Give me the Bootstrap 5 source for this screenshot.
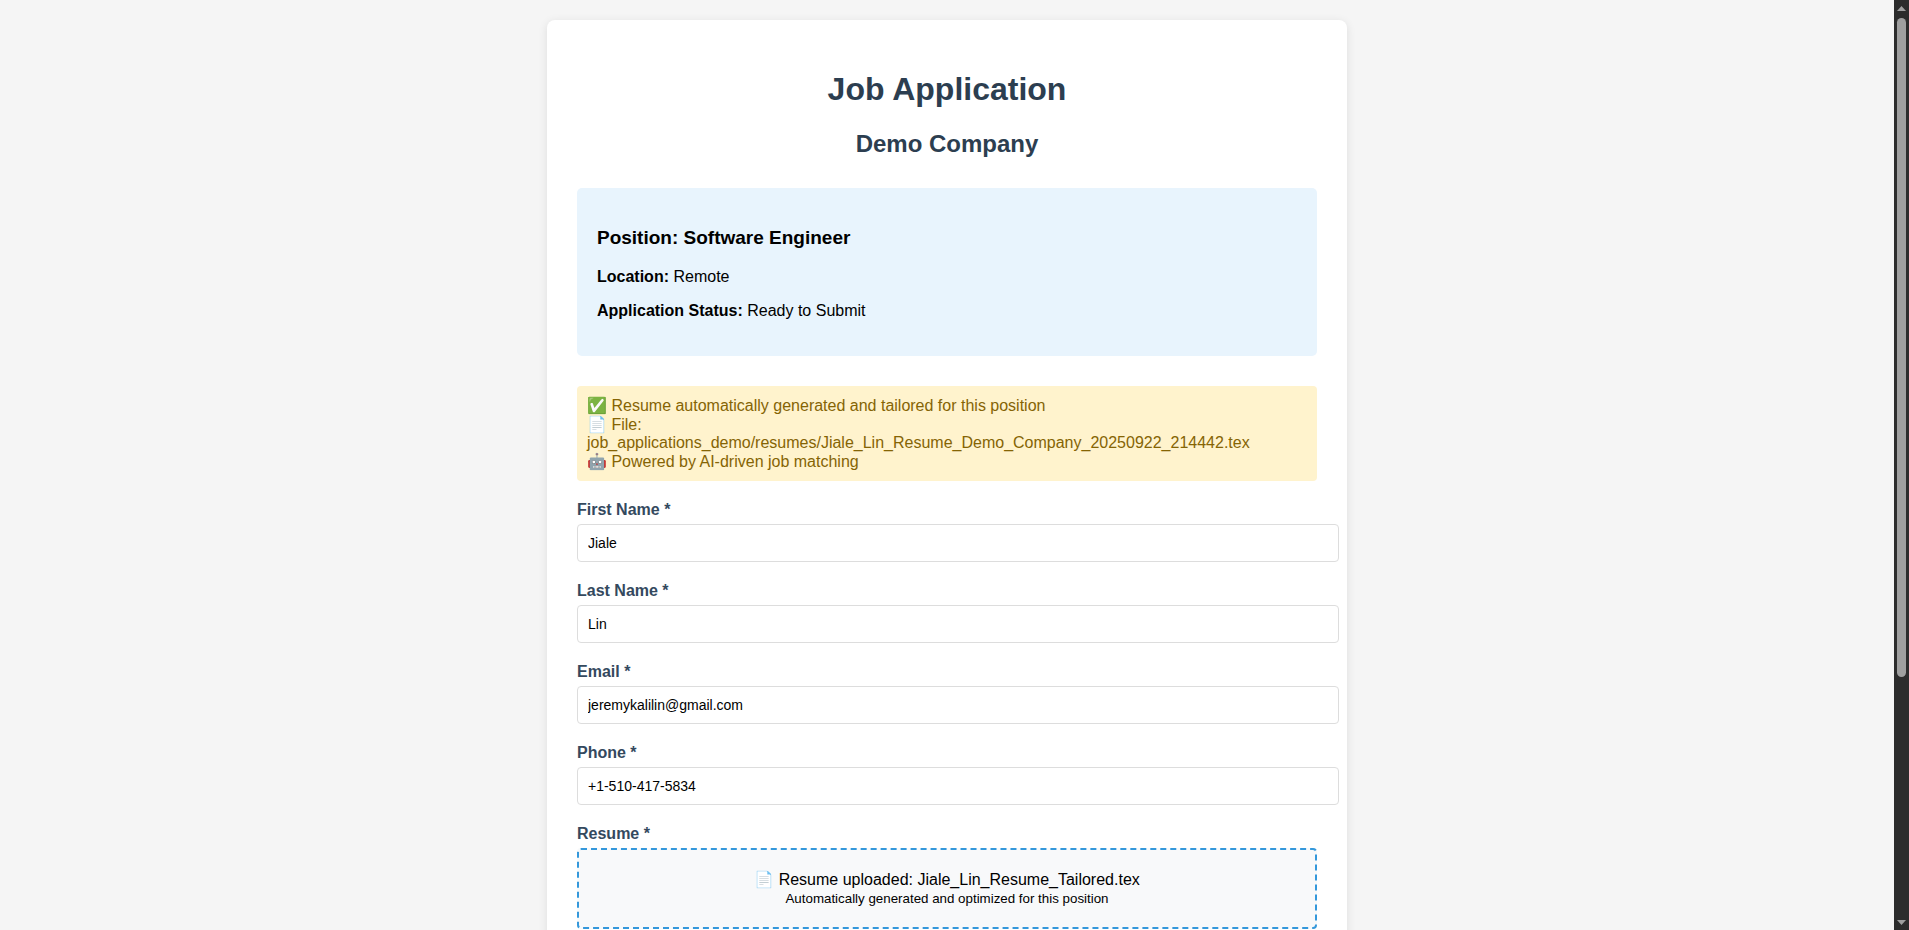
<!DOCTYPE html>
<html lang="en">
<head>
<meta charset="utf-8">
<meta name="viewport" content="width=device-width, initial-scale=1">
<title>Job Application - Demo Company</title>
<link href="https://cdn.jsdelivr.net/npm/bootstrap@5.3.0/dist/css/bootstrap.min.css" rel="stylesheet">
<style>
  body { font-family: "Liberation Sans", Arial, sans-serif; font-size: 16px; line-height: normal; color: #000; background: #f5f5f5; }
  .app-sheet { max-width: 800px; padding: 51px 30px 30px; border-radius: 8px; box-shadow: 0 2px 10px rgba(0,0,0,.1); }
  .app-header { color: #2c3e50; margin-bottom: 30px; }
  h1, h2, h3 { font-weight: 700; line-height: normal; }
  h1 { font-size: 32px; margin-bottom: 22px; }
  h2 { font-size: 24px; margin-bottom: 0; }
  h3 { font-size: 19px; margin-bottom: 19px; }
  .job-info { background: #e8f4fd; border-radius: 5px; padding: 39px 20px 20px; margin-bottom: 30px; }
  .auto-note { background: #fff3cd; color: #856404; border-radius: 4px; padding: 10px; margin-bottom: 20px; }
  .field { margin-bottom: 20px; }
  .field-label { display: block; margin-bottom: 5px; font-weight: 700; color: #34495e; }
  /* text boxes run a little past the column, into the sheet's padding */
  .field .form-control { width: calc(100% + 22px); padding: 10px; border: 1px solid #ddd; border-radius: 4px; font-size: 14px; line-height: 16px; color: #000; }
  .upload-box { border: 2px dashed #3498db; border-radius: 4px; background: #f8f9fa; padding: 20px; }
  .upload-box small { font-size: smaller; }
  .scroll-track { width: 15px; background: #2c2c2c; }
  .scroll-thumb { width: 9px; height: 71.5%; border-radius: 5px; background: #9f9f9f; }
</style>
</head>
<body>
<div class="d-flex vh-100 overflow-hidden">
  <main class="flex-grow-1 overflow-hidden pt-3">
    <div class="app-sheet bg-white mx-auto mt-1">
      <header class="app-header text-center">
        <h1>Job Application</h1>
        <h2>Demo Company</h2>
      </header>
      <section class="job-info">
        <h3>Position: Software Engineer</h3>
        <p><strong>Location:</strong> Remote</p>
        <p><strong>Application Status:</strong> Ready to Submit</p>
      </section>
      <div class="auto-note">
        ✅ Resume automatically generated and tailored for this position<br>
        📄 File: job_applications_demo/resumes/Jiale_Lin_Resume_Demo_Company_20250922_214442.tex<br>
        🤖 Powered by AI-driven job matching
      </div>
      <form>
        <div class="field">
          <label class="field-label" for="firstName">First Name *</label>
          <input class="form-control" type="text" id="firstName" value="Jiale" required>
        </div>
        <div class="field">
          <label class="field-label" for="lastName">Last Name *</label>
          <input class="form-control" type="text" id="lastName" value="Lin" required>
        </div>
        <div class="field">
          <label class="field-label" for="email">Email *</label>
          <input class="form-control" type="email" id="email" value="jeremykalilin@gmail.com" required>
        </div>
        <div class="field">
          <label class="field-label" for="phone">Phone *</label>
          <input class="form-control" type="tel" id="phone" value="+1-510-417-5834" required>
        </div>
        <div class="field">
          <div class="field-label" id="resumeLabel">Resume *</div>
          <div class="upload-box text-center" role="group" aria-labelledby="resumeLabel">
            📄 Resume uploaded: Jiale_Lin_Resume_Tailored.tex<br>
            <small>Automatically generated and optimized for this position</small>
          </div>
        </div>
      </form>
    </div>
  </main>
  <div class="scroll-track d-flex flex-column flex-shrink-0 align-items-center justify-content-between py-1" aria-hidden="true">
    <svg width="15" height="10" viewBox="0 0 15 10"><path d="M3 7 7.500 2 12 7Z" fill="#9f9f9f"/></svg>
    <div class="scroll-thumb mt-1 mb-auto"></div>
    <svg width="15" height="10" viewBox="0 0 15 10"><path d="M3 4 7.500 9 12 4Z" fill="#9f9f9f"/></svg>
  </div>
</div>
<script src="https://cdn.jsdelivr.net/npm/bootstrap@5.3.0/dist/js/bootstrap.bundle.min.js"></script>
</body>
</html>
